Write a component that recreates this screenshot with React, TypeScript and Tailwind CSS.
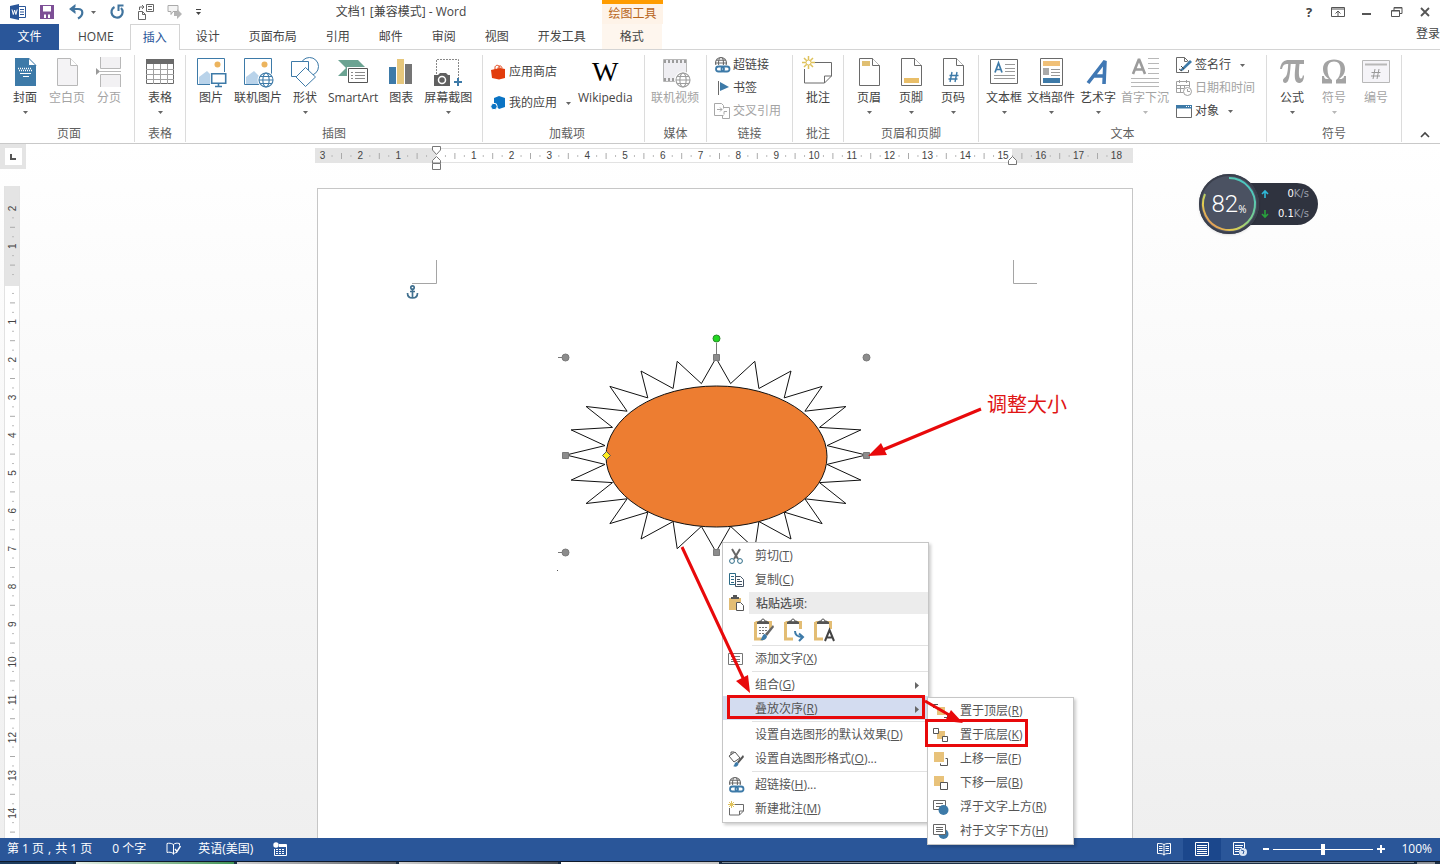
import type { ReactNode } from "react";

const BLUE = "#3d7aa8";
const GRAY = "#6a6a6a";
const LIGHT = "#b8b8b8";
const TAN = "#e8c27a";
const TEAL = "#2b6a86";

const TABS = ["HOME", "插入", "设计", "页面布局", "引用", "邮件", "审阅", "视图", "开发工具"];

function Icon({
  w = 32,
  h = w,
  className = "",
  children,
}: {
  w?: number;
  h?: number;
  className?: string;
  children: ReactNode;
}) {
  return (
    <svg
      aria-hidden
      width={w}
      height={h}
      viewBox={`0 0 ${w} ${h}`}
      fill="none"
      className={`shrink-0 overflow-visible ${className}`}
    >
      {children}
    </svg>
  );
}

function Caret({ muted }: { muted?: boolean }) {
  return (
    <Icon w={5} h={3}>
      <path d="M0 0h5L2.5 3z" fill={muted ? LIGHT : "#666"} />
    </Icon>
  );
}

/* ---------- icons ---------- */

function GlobeShape({ x, y, r, color }: { x: number; y: number; r: number; color: string }) {
  return (
    <g stroke={color} strokeWidth="1.1">
      <circle cx={x} cy={y} r={r} fill="#fff" />
      <ellipse cx={x} cy={y} rx={r * 0.45} ry={r} />
      <path d={`M${x - r} ${y}h${r * 2}M${x - r * 0.85} ${y - r * 0.5}h${r * 1.7}M${x - r * 0.85} ${y + r * 0.5}h${r * 1.7}`} />
    </g>
  );
}

function PageOutline({ color = GRAY, fill = "#fff" }: { color?: string; fill?: string }) {
  return (
    <>
      <path d="M6.5 2.5h13l7 7v20h-20z" fill={fill} stroke={color} />
      <path d="M19.5 2.5v7h7" fill="#fff" stroke={color} />
    </>
  );
}

const CoverIcon = () => (
  <Icon>
    <path d="M6 2h13l8 8v20H6z" fill={BLUE} />
    <path d="M19.5 2v7.5H27z" fill="#fff" stroke={BLUE} />
    <path d="M9 12.500h14M10 14.500h13" stroke="#fff" strokeDasharray="1 1" strokeWidth="1.500" />
    <path d="M11 17.500h11M14 20.500h6" stroke="#fff" />
  </Icon>
);

const BlankIcon = () => (
  <Icon>
    <PageOutline color={LIGHT} fill="#f4f3f5" />
  </Icon>
);

const BreakIcon = () => (
  <Icon>
    <path d="M7.5 1v11.5h20V1M7.5 31V18.500h20V31" fill="#f2f1f3" stroke={LIGHT} />
    <path d="M7 15.500h21" stroke={LIGHT} />
    <path d="M3 12l4 3.500L3 19z" fill="#999" />
  </Icon>
);

const TableIcon = () => (
  <Icon>
    <path d="M2.5 3.5h27v24h-27z" fill="#fff" stroke={GRAY} />
    <path d="M2 13.500h28M2 18.500h28M2 23.500h28M9.500 8v20M16.500 8v20M23.500 8v20" stroke="#a0a0a0" />
    <path d="M2 3h28v5H2z" fill="#6a6a6a" />
  </Icon>
);

function PictureShape() {
  return (
    <>
      <path d="M2.5 2.5h27v26h-27z" fill="#fff" stroke={BLUE} />
      <path d="M4 28v-7l8-6 7 7v6z" fill="#b9d3ea" />
      <circle cx="22.5" cy="8.5" r="3" fill="#ecb45e" />
    </>
  );
}

const PictureIcon = () => (
  <Icon>
    <PictureShape />
    <path d="M15 16h17v13H15z" fill="#fff" />
    <path d="M16.7 17.700h14v9.500h-14z" fill="#fff" stroke={BLUE} strokeWidth="1.6" />
    <path d="M23.5 27v3M20 30.500h7" stroke={BLUE} strokeWidth="1.6" />
  </Icon>
);

const OnlinePictureIcon = () => (
  <Icon>
    <PictureShape />
    <circle cx="24" cy="24" r="8.5" fill="#fff" />
    <GlobeShape x={24} y={24} r={7} color={BLUE} />
  </Icon>
);

const ShapesIcon = () => (
  <Icon>
    <circle cx="20.5" cy="10.5" r="9" stroke={BLUE} fill="#fff" />
    <path d="M2.5 5.500h17v15h-17z" fill="#fff" stroke={BLUE} />
    <path d="M16.5 11.500l10 9.500-10 9.500L7 21z" fill="#fff" stroke={BLUE} />
  </Icon>
);

const SmartArtIcon = () => (
  <Icon>
    <path d="M1 4h20l8 8-8 8H1l8-8z" fill="#6ba392" />
    <path d="M10 11h21v17H10z" fill="#fff" />
    <path d="M11.5 12.500h19v14h-19z" fill="#fff" stroke="#555" />
    <path d="M14 16.500h2M14 19.500h2M14 22.500h2M18 16.500h10M18 19.500h10M18 22.500h10" stroke="#8a8a8a" />
  </Icon>
);

const ChartIcon = () => (
  <Icon>
    <path d="M4 11h7v17H4z" fill={BLUE} />
    <path d="M12 3h7v25h-7z" fill="#e6c77c" />
    <path d="M20 8h7v20h-7z" fill="#757575" />
  </Icon>
);

const ScreenshotIcon = () => (
  <Icon>
    <path d="M4.5 18V3.500h22V24" stroke="#888" strokeDasharray="2 1" />
    <path d="M2 19h4l2-2h6l2 2h2v11H2z" fill="#606060" />
    <circle cx="10" cy="24" r="3.5" fill="#606060" stroke="#fff" strokeWidth="1.5" />
    <path d="M26 22v8M22 26h8" stroke={BLUE} strokeWidth="2" />
  </Icon>
);

const StoreIcon = () => (
  <Icon w={16}>
    <path d="M1 6l9-2 5 1v9l-6 1.500L2 14z" fill="#e23c0c" />
    <path d="M5 6V3.500C5 1 9 0 10 4M8 5c0-4 4-4 4-.5" stroke="#e23c0c" />
  </Icon>
);

const MyAppsIcon = () => (
  <Icon w={16}>
    <path d="M4 3l5-2 6 2v9l-6 2-2-2V9L4 8z" fill="#0b74c4" />
    <circle cx="4" cy="11.5" r="3.2" fill="#0b74c4" stroke="#fff" />
  </Icon>
);

const VideoIcon = () => (
  <Icon>
    <path d="M4.5 3.500h23v22h-23z" fill="#efeef2" stroke={LIGHT} />
    <path d="M5 5.500h22M5 23.500h22" stroke="#9c9c9c" strokeWidth="3" strokeDasharray="2 2" />
    <circle cx="24" cy="24" r="8.5" fill="#fff" />
    <GlobeShape x={24} y={24} r={7} color="#9c9c9c" />
  </Icon>
);

const LinkIcon = () => (
  <Icon w={16}>
    <GlobeShape x={7} y={6} r={5.5} color={GRAY} />
    <path d="M1 8h15v8H1z" fill="#fff" />
    <rect x="2" y="9.5" width="8" height="5" rx="2.5" stroke={BLUE} strokeWidth="1.8" />
    <rect x="7.5" y="9.5" width="8" height="5" rx="2.5" stroke={BLUE} strokeWidth="1.8" />
  </Icon>
);

const BookmarkIcon = () => (
  <Icon w={16}>
    <path d="M4.5 1v14" stroke={GRAY} />
    <path d="M6 2l9 5-9 4z" fill={BLUE} />
  </Icon>
);

const CrossRefIcon = () => (
  <Icon w={16}>
    <path d="M9.5 12.500h-9V.5h7l2 2v3M3 6.500h5M6 4.500l2 2-2 2" stroke="#a8a8a8" />
    <path d="M10 4.500h5.500v11H8.500V12M13 8.500h-3v3" stroke="#a8a8a8" />
  </Icon>
);

const CommentIcon = () => (
  <Icon>
    <path d="M12 6.500h17.500V20l-7 7H2.500V13" fill="#fff" stroke={GRAY} />
    <path d="M29.5 20h-7v7" stroke={GRAY} />
    <path d="M6.5 0v13M0 6.500h13M2 2l9 9M11 2l-9 9" stroke="#dfc25c" strokeWidth="1.5" />
    <circle cx="6.5" cy="6.5" r="2.5" fill="#fff" stroke="#dfc25c" />
  </Icon>
);

const HeaderIcon = () => (
  <Icon>
    <PageOutline />
    <path d="M9 5h8v5H9z" fill="#e0bf72" />
  </Icon>
);

const FooterIcon = () => (
  <Icon>
    <PageOutline />
    <path d="M9 22h15v5H9z" fill="#e9be68" />
  </Icon>
);

const PageNumberIcon = () => (
  <Icon>
    <PageOutline />
    <path d="M15 16l-2 10M20 16l-2 10M12.5 19.500h9M11.500 23h9" stroke={BLUE} strokeWidth="1.4" />
  </Icon>
);

const TextBoxIcon = () => (
  <Icon>
    <path d="M2.5 3.500h27v24h-27z" fill="#fff" stroke={GRAY} />
    <path d="M7 16.500L10.500 7l3.500 9.500M8.500 13.500h4.500" stroke={BLUE} strokeWidth="1.7" />
    <path d="M17 8.500h10M17 12.500h10M17 15.500h10M6 19.500h21M6 22.500h21" stroke="#9a9a9a" />
  </Icon>
);

const QuickPartsIcon = () => (
  <Icon>
    <path d="M5.5 2.500h22v27h-22z" fill="#fff" stroke={GRAY} />
    <path d="M8 5h17v5H8z" fill="#f0c078" />
    <path d="M8 12h6v7H8z" fill="#a9a9a9" />
    <path d="M16 13.500h9M16 16.500h9M16 19.500h9" stroke="#999" />
    <path d="M8 22h17v5H8z" fill={BLUE} />
  </Icon>
);

const WordArtIcon = () => (
  <Icon>
    <path d="M6 27L23 5l-1 23M11 20h12" stroke="#4078b4" strokeWidth="3.6" strokeLinejoin="bevel" />
  </Icon>
);

const DropCapIcon = () => (
  <Icon>
    <path d="M4 18l6-15 6 15M6 13.500h8" stroke="#9c9c9c" strokeWidth="2.6" strokeLinejoin="bevel" />
    <path d="M19 2.500h11M19 7.500h11M19 12.500h11M19 17.500h11M2 22.500h28M2 26.500h28M2 30.500h28" stroke={LIGHT} />
  </Icon>
);

const SignatureIcon = () => (
  <Icon w={16}>
    <path d="M12.5 13v2.500H.5V.5h8l4 4" fill="#fff" stroke={GRAY} />
    <path d="M8.5.5v4h3" stroke={GRAY} />
    <path d="M5 12L14 3l2 2-9 8.500-3 .5z" fill={BLUE} />
    <path d="M3 12l3 2M5 9l3 3" stroke="#444" />
  </Icon>
);

const DateIcon = () => (
  <Icon w={16}>
    <path d="M.5 1.500h13v6M.5 1.500v11h7M1 5.500h12M4.500 5v7M8.500 5v3M1 8.500h7M3.500 0v3M10.500 0v3" stroke="#a0a0a0" />
    <circle cx="11.5" cy="11.5" r="4" fill="#fff" stroke="#a0a0a0" />
    <path d="M11.5 9v2.500H14" stroke="#a0a0a0" />
  </Icon>
);

const ObjectIcon = () => (
  <Icon w={16}>
    <path d="M.5 2.500h15v12H.5z" fill="#fff" stroke={GRAY} />
    <path d="M0 2h16v3.500H0z" fill={BLUE} />
    <path d="M10 3.500h5" stroke="#fff" strokeDasharray="1 1" />
  </Icon>
);

const PiIcon = () => (
  <Icon>
    <path
      d="M4 13C5 6 8 4 13 4h15v4h-4.500c-.8 7-1 14 1 14.500 1.500.3 2-1 2.300-3H28c0 5-2 7.500-5 7.500-6-.5-4-11-3.300-19h-5c-.5 7-1 13-2.500 16.500C11 28 6.500 27.500 7 24c.5-2 3-2.500 4-6 .8-3 1-6 1.200-10C8 8 7 9 6 13z"
      fill="#a3a3a3"
    />
  </Icon>
);

const OmegaIcon = () => (
  <Icon>
    <path
      d="M4 20h2c.5 3 1 3 5 3-3-2-6-5-6-10C5 7 9 3.500 16 3.500S27 7 27 13c0 5-3 8-6 10 4 0 4.500 0 5-3h2v7.500H18V24c3-2 4.500-6 4.500-11 0-4.500-2-7.500-6.500-7.500S9.500 8.500 9.500 13c0 5 1.500 9 4.500 11v3.500H4z"
      fill="#a3a3a3"
    />
  </Icon>
);

const NumberIcon = () => (
  <Icon>
    <path d="M2.5 4.500h27v22h-27z" fill="#f5f4f8" stroke={LIGHT} />
    <path d="M5 8.500h22" stroke={LIGHT} strokeWidth="2" />
    <path d="M15 13l-2 10M19 13l-2 10M11.5 16.500h9M11 20h9" stroke="#999" />
  </Icon>
);

/* ---------- title bar ---------- */

function TitleBar() {
  return (
    <div className="flex h-6 items-center">
      <div className="flex w-[200px] shrink-0 items-center pl-[10px]">
        <Icon w={16} className="mr-[13px]">
          <path d="M0 2l9-2v16l-9-2z" fill="#2a5699" />
          <path d="M9 2.500h6.500v11H9M10 5.500h4M10 8h4M10 10.500h4" stroke="#2a5699" />
          <path d="M2 5.500l1.300 5L4.600 6l1.300 4.500 1.300-5" stroke="#fff" />
        </Icon>
        <button aria-label="保存" className="mr-[14px]">
          <Icon w={16}>
            <path d="M1 1h14v14H1z" fill="#7d4f96" />
            <path d="M4 2h8v5.500H4zM5 10.500h2V14H5zM9 10.500h2V14H9z" fill="#fff" />
          </Icon>
        </button>
        <button aria-label="撤消" className="mr-[6px]">
          <Icon w={16}>
            <path d="M3 5h6c5.500 0 6 6 0 9.500" stroke="#41749e" strokeWidth="2.2" />
            <path d="M6.5 0v3L4.500 5l2 2v3L0 5z" fill="#41749e" />
          </Icon>
        </button>
        <Caret />
        <button aria-label="重复" className="ml-[13px] mr-[13px]">
          <Icon w={16}>
            <path d="M5.5 3A5.600 5.600 0 1 0 12 4" stroke="#41749e" strokeWidth="2.2" />
            <path d="M14.5 1.500H9.500V7" stroke="#41749e" strokeWidth="2" />
          </Icon>
        </button>
        <button aria-label="粘贴格式" className="mr-[13px]">
          <Icon w={16}>
            <path d="M8.5.5h7v7h-7zM10 2.500h4M10 5.500h4M.5 7.500h4l3 3v5h-7zM4.500 7.500v3h3M1.500 6V3h4M4 1l2 2-2 2" stroke="#666" />
          </Icon>
        </button>
        <Icon w={16} className="mr-[13px]">
          <path d="M1 1.500h10v6H6l-2 3v-3H1z" fill="#f4f4f4" stroke="#aaa" />
          <path d="M10 5l5 5-5 5v-3H7V8h3z" fill="#b5b5b5" />
        </Icon>
        <button aria-label="自定义快速访问工具栏">
          <Icon w={5} h={6}>
            <path d="M0 .5h5" stroke="#444" />
            <path d="M0 3h5L2.5 6z" fill="#444" />
          </Icon>
        </button>
      </div>
      <h1 className="w-[402px] shrink-0 text-center">文档1 [兼容模式] - Word</h1>
      <div className="flex h-full w-[61px] shrink-0 items-center justify-center border-t-4 border-[#ff9c00] bg-[#fef3e8] text-[#b8651b]">
        绘图工具
      </div>
      <div className="ml-auto flex items-center gap-[15px] pr-2">
        <button aria-label="帮助" className="w-[14px] text-[13px] font-bold">
          ?
        </button>
        <button aria-label="功能区显示选项">
          <Icon w={14} h={12}>
            <path d="M.5 1.500h13v9H.5z" stroke="#555" />
            <path d="M1 3h12M7 10V5M4.500 7.500L7 5l2.500 2.500" stroke="#555" />
          </Icon>
        </button>
        <button aria-label="最小化">
          <Icon w={14} h={12}>
            <path d="M2 8h9" stroke="#555" strokeWidth="2" />
          </Icon>
        </button>
        <button aria-label="向下还原">
          <Icon w={14} h={12}>
            <path d="M5 4V1.500h8v6h-2M2.500 4.500h8v6h-8zM5 2h8M3 5h8" stroke="#555" />
          </Icon>
        </button>
        <button aria-label="关闭">
          <Icon w={14} h={12}>
            <path d="M3 2l8 8M11 2l-8 8" stroke="#555" strokeWidth="1.8" />
          </Icon>
        </button>
      </div>
    </div>
  );
}

function TabRow() {
  return (
    <div
      role="tablist"
      className="flex h-[26px] shrink-0 items-stretch gap-[3px] shadow-[inset_0_-1px_0_#d4d4d4]"
    >
      <button role="tab" className="mr-[3px] w-[59px] bg-[#2a5699] text-white">
        文件
      </button>
      {TABS.map((t) =>
        t === "插入" ? (
          <button
            key={t}
            role="tab"
            aria-selected
            className="border-x border-t border-[#d4d4d4] bg-white px-3 text-[#2a5699]"
          >
            {t}
          </button>
        ) : (
          <button key={t} role="tab" className="px-[13px]">
            {t}
          </button>
        ),
      )}
      <button role="tab" className="border-b border-[#d4d4d4] bg-[#fef6ee] px-[18px]">
        格式
      </button>
      <a href="#signin" className="ml-auto pt-[2px]">
        登录
      </a>
    </div>
  );
}

/* ---------- ribbon ---------- */

function Group({ label, className, children }: { label: string; className: string; children: ReactNode }) {
  return (
    <section
      aria-label={label}
      className={`mb-px mt-[5px] flex shrink-0 flex-col border-r border-[#dcdcdc] ${className}`}
    >
      <div className="flex flex-1">{children}</div>
      <div className="text-center text-[#5f5f5f]">{label}</div>
    </section>
  );
}

function BigButton({
  icon,
  label,
  caret,
  disabled,
}: {
  icon: ReactNode;
  label: string;
  caret?: boolean;
  disabled?: boolean;
}) {
  return (
    <button
      disabled={disabled}
      className={`flex min-w-[42px] flex-col items-center self-start px-[2px] pt-px ${disabled ? "text-[#a3a3a3]" : ""}`}
    >
      {icon}
      <span className="mt-[2px] whitespace-nowrap">{label}</span>
      {caret && (
        <span className="mt-[5px]">
          <Caret muted={disabled} />
        </span>
      )}
    </button>
  );
}

function SmallButton({
  icon,
  label,
  caret,
  disabled,
}: {
  icon: ReactNode;
  label: string;
  caret?: boolean;
  disabled?: boolean;
}) {
  return (
    <button
      disabled={disabled}
      className={`flex h-5 items-center gap-[3px] whitespace-nowrap ${disabled ? "text-[#a3a3a3]" : ""}`}
    >
      {icon}
      {label}
      {caret && (
        <span className="ml-[6px]">
          <Caret />
        </span>
      )}
    </button>
  );
}

function Ribbon() {
  return (
    <div className="flex h-[94px] shrink-0 border-b border-[#c9c9c9] bg-white">
      <Group label="页面" className="w-[135px] pl-1">
        <BigButton icon={<CoverIcon />} label="封面" caret />
        <BigButton icon={<BlankIcon />} label="空白页" disabled />
        <BigButton icon={<BreakIcon />} label="分页" disabled />
      </Group>
      <Group label="表格" className="w-[51px] px-1">
        <BigButton icon={<TableIcon />} label="表格" caret />
      </Group>
      <Group label="插图" className="w-[297px] px-1">
        <BigButton icon={<PictureIcon />} label="图片" />
        <BigButton icon={<OnlinePictureIcon />} label="联机图片" />
        <BigButton icon={<ShapesIcon />} label="形状" caret />
        <BigButton icon={<SmartArtIcon />} label="SmartArt" />
        <BigButton icon={<ChartIcon />} label="图表" />
        <BigButton icon={<ScreenshotIcon />} label="屏幕截图" caret />
      </Group>
      <Group label="加载项" className="w-[162px] pl-[7px]">
        <div className="flex flex-col items-start gap-[11px] pt-[7px]">
          <SmallButton icon={<StoreIcon />} label="应用商店" />
          <SmallButton icon={<MyAppsIcon />} label="我的应用" caret />
        </div>
        <button className="ml-[7px] flex flex-col items-center self-start pt-px">
          <span className="flex h-8 items-center font-['Liberation_Serif'] text-[28px] text-black">W</span>
          <span className="mt-[2px]">Wikipedia</span>
        </button>
      </Group>
      <Group label="媒体" className="w-[62px] px-1">
        <BigButton icon={<VideoIcon />} label="联机视频" disabled />
      </Group>
      <Group label="链接" className="w-[86px]">
        <div className="flex flex-col items-start gap-[3px] pl-[7px]">
          <SmallButton icon={<LinkIcon />} label="超链接" />
          <SmallButton icon={<BookmarkIcon />} label="书签" />
          <SmallButton icon={<CrossRefIcon />} label="交叉引用" disabled />
        </div>
      </Group>
      <Group label="批注" className="w-[51px] px-1">
        <BigButton icon={<CommentIcon />} label="批注" />
      </Group>
      <Group label="页眉和页脚" className="w-[135px] px-1">
        <BigButton icon={<HeaderIcon />} label="页眉" caret />
        <BigButton icon={<FooterIcon />} label="页脚" caret />
        <BigButton icon={<PageNumberIcon />} label="页码" caret />
      </Group>
      <Group label="文本" className="w-[288px] px-1">
        <BigButton icon={<TextBoxIcon />} label="文本框" caret />
        <BigButton icon={<QuickPartsIcon />} label="文档部件" caret />
        <BigButton icon={<WordArtIcon />} label="艺术字" caret />
        <BigButton icon={<DropCapIcon />} label="首字下沉" caret disabled />
        <div className="ml-[5px] flex flex-col items-start gap-[3px]">
          <SmallButton icon={<SignatureIcon />} label="签名行" caret />
          <SmallButton icon={<DateIcon />} label="日期和时间" disabled />
          <SmallButton icon={<ObjectIcon />} label="对象" caret />
        </div>
      </Group>
      <Group label="符号" className="w-[135px] px-1">
        <BigButton icon={<PiIcon />} label="公式" caret />
        <BigButton icon={<OmegaIcon />} label="符号" caret disabled />
        <BigButton icon={<NumberIcon />} label="编号" disabled />
      </Group>
      <button aria-label="折叠功能区" className="ml-auto self-end pb-[6px] pr-[10px]">
        <Icon w={10} h={5}>
          <path d="M1 5l4-4 4 4" stroke="#444" strokeWidth="1.6" />
        </Icon>
      </button>
    </div>
  );
}

/* ---------- rulers ---------- */

const CM = 37.8;

function HorizontalRuler() {
  const zero = 121;
  const marks = Array.from({ length: 22 }, (_, i) => i - 3);
  return (
    <svg aria-hidden width="818" height="26" viewBox="0 0 818 26" className="shrink-0 overflow-visible">
      <path d="M0 4h818v15H0z" fill="#e4e4e4" />
      <path d="M121 4h576v15H121z" fill="#fff" />
      <path d="M121 4.5h576M121 18.5h576" stroke="#e2e2e2" />
      {marks.map((n) => {
        const x = zero + n * CM;
        return (
          <g key={n}>
            {n !== 0 && (
              <text x={x} y="15" textAnchor="middle" fontSize="10" fill="#444">
                {Math.abs(n)}
              </text>
            )}
            {n < 18 && (
              <>
                <path d={`M${x + CM / 2} 9v6`} stroke="#aaa" />
                <path d={`M${x + CM / 4} 11v2M${x + (CM * 3) / 4} 11v2`} stroke="#bbb" />
              </>
            )}
          </g>
        );
      })}
      <path d="M117.5 2.500h8V6l-4 4.500-4-4.500zM121.500 12.500l4 4v2.500h-8v-2.500zM117.500 19.500h8v6h-8zM697.500 12.500l4 4v4h-8v-4z" fill="#fff" stroke="#777" />
    </svg>
  );
}

function VerticalRuler() {
  const zero = 98;
  const marks = Array.from({ length: 17 }, (_, i) => i - 2);
  return (
    <div className="mt-[17px] w-[16px] shrink-0 overflow-hidden border-x border-[#e2e2e2] bg-white">
      <svg aria-hidden width="14" height="650" viewBox="0 0 14 650">
        <path d="M0 0h14v100H0z" fill="#e4e4e4" />
        {marks.map((n) => {
          const y = zero + n * CM;
          return (
            <g key={n}>
              {n !== 0 && (
                <text
                  x="0"
                  y="0"
                  transform={`translate(11 ${y}) rotate(-90)`}
                  textAnchor="middle"
                  fontSize="10"
                  fill="#444"
                >
                  {Math.abs(n)}
                </text>
              )}
              <path d={`M5 ${y + CM / 2}h5`} stroke="#aaa" />
              <path d={`M7 ${y + CM / 4}h2M7 ${y + (CM * 3) / 4}h2`} stroke="#bbb" />
            </g>
          );
        })}
      </svg>
    </div>
  );
}

/* ---------- drawing on the page ---------- */

function sunPoints() {
  const pts: string[] = [];
  for (let i = 0; i < 48; i++) {
    const a = (i * Math.PI) / 24;
    const [rx, ry] = i % 2 === 0 ? [150, 97] : [112, 72];
    pts.push(`${(716 + rx * Math.cos(a)).toFixed(1)},${(455 + ry * Math.sin(a)).toFixed(1)}`);
  }
  return pts.join(" ");
}

function SunShape() {
  return (
    <svg aria-hidden width="815" height="649" viewBox="318 189 815 649" fill="none" className="absolute left-0 top-0">
      <path d="M412 283.500h24.500V260M1037 283.500h-23.500V260" stroke="#a5a5a5" />
      <g stroke="#41708f" strokeWidth="1.7">
        <circle cx="412.5" cy="287.5" r="1.7" />
        <path d="M412.5 289v9M410 291.500h5M407.500 293c0 3 2 5 5 5s5-2 5-5" />
      </g>
      <polygon points={sunPoints()} fill="#fff" stroke="#111" />
      <ellipse cx="716.5" cy="456.5" rx="110.5" ry="70.5" fill="#ed7d31" stroke="#111" />
      <path d="M716.5 343v12M558 357.500h4M558 552.500h4" stroke="#777" />
      <g fill="#8c8c8c" stroke="#7a7a7a">
        <circle cx="565.5" cy="357.5" r="3.5" />
        <circle cx="866.5" cy="357.5" r="3.5" />
        <circle cx="565.5" cy="552.5" r="3.5" />
        <path d="M713.5 354.500h6v6h-6zM562.500 452.500h6v6h-6zM863.500 452.500h6v6h-6zM713.500 549.500h6v6h-6z" />
      </g>
      <circle cx="716.5" cy="338.5" r="3.5" fill="#22d822" stroke="#2a8a2a" />
      <path d="M606.5 451.500l4 4-4 4-4-4z" fill="#ffee20" stroke="#555" />
      <path d="M557 570.500h1" stroke="#555" />
    </svg>
  );
}

function Annotations() {
  return (
    <svg
      aria-hidden
      width="815"
      height="649"
      viewBox="318 189 815 649"
      fill="none"
      className="pointer-events-none absolute left-0 top-0 z-30"
    >
      <g stroke="#e8090b" strokeWidth="3">
        <path d="M981 409L880 451M682 547l62 133M925 701l26 15" />
        <path d="M728.5 696.500h195v21h-195zM926.500 720.500h100v25h-100z" />
      </g>
      <g fill="#e8090b">
        <path d="M868 456l13-13 6 12zM750 693l-14-12 12-6zM963 723l-18-2 6-11z" />
      </g>
    </svg>
  );
}

/* ---------- context menus ---------- */

function MenuItem({
  icon,
  text,
  hotkey,
  tail = "",
  sub,
  active,
}: {
  icon?: ReactNode;
  text: string;
  hotkey: string;
  tail?: string;
  sub?: boolean;
  active?: boolean;
}) {
  return (
    <button
      role="menuitem"
      className={`flex h-6 w-full items-center whitespace-nowrap pl-[5px] pr-[9px] pt-[2px] text-left ${active ? "bg-[#d3dcf0]" : ""}`}
    >
      <span className="mr-[11px] w-4 shrink-0">{icon}</span>
      <span>
        {text}(<u>{hotkey}</u>){tail}
      </span>
      {sub && (
        <Icon w={4} h={7} className="ml-auto">
          <path d="M0 0l4 3.500L0 7z" fill="#666" />
        </Icon>
      )}
    </button>
  );
}

function Divider() {
  return <div role="separator" className="ml-[29px] h-[2px] border-b border-[#e2e2e2]" />;
}

function Clipboard({ children }: { children: ReactNode }) {
  return (
    <Icon w={22} h={24}>
      <path d="M2.5 4v17H10M2.500 4.500h15V11" stroke="#e3bd74" strokeWidth="3" />
      <path d="M4 6V4l3-1.500h6L16 4v2z" fill="#555" />
      <circle cx="10" cy="2.500" r="1.5" fill="#fff" stroke="#555" />
      {children}
    </Icon>
  );
}

function ContextMenu() {
  return (
    <div
      role="menu"
      className="absolute left-[404px] top-[353px] z-10 w-[207px] border border-[#c6c6c6] bg-white pb-[2px] text-[#555] shadow-[2px_2px_3px_rgba(0,0,0,0.2)]"
    >
      <MenuItem
        icon={
          <Icon w={16}>
            <path d="M4 1l6 10M12 1L6 11" stroke="#666" strokeWidth="2" />
            <circle cx="4" cy="13" r="2.4" stroke={TEAL} />
            <circle cx="12" cy="13" r="2.4" stroke={TEAL} />
          </Icon>
        }
        text="剪切"
        hotkey="T"
      />
      <MenuItem
        icon={
          <Icon w={16}>
            <path d="M7 12.500H1.500v-11h6v3M3 4.500h3M3 7.500h3M3 10.500h3" stroke={TEAL} />
            <path d="M7.5 4.500h5l3 3v7h-8zM9 7.500h3M9 9.500h5M9 12.500h5" stroke="#456" />
          </Icon>
        }
        text="复制"
        hotkey="C"
      />
      <div className="flex h-6 items-center pl-[5px]">
        <Icon w={16}>
          <path d="M1 3h12v4H8v8H1z" fill="#e3bd74" />
          <path d="M3 3h8M5 1h4" stroke="#555" strokeWidth="2" />
          <path d="M8.5 7.500h4l3 3v5h-7z" fill="#fff" stroke="#555" />
        </Icon>
        <span className="ml-[5px] h-[22px] flex-1 bg-[#ececec] pl-[7px] font-medium leading-6">粘贴选项:</span>
      </div>
      <div className="flex h-[29px] items-center gap-2 pl-[30px]">
        <button aria-label="保留源格式">
          <Clipboard>
            <path d="M6 9.500h8M6 12.500h8M6 15.500h6" stroke="#777" strokeDasharray="2 1" />
            <path d="M20 7l-8 9 2 2 7-9z" fill="#666" />
            <path d="M7 22c2 0 2-6 5-6l2 2c0 3-3 5-7 4z" fill={BLUE} />
          </Clipboard>
        </button>
        <button aria-label="合并格式">
          <Clipboard>
            <path d="M12 13c0 5 3 6 8 6M16 15.500l4 3.500-4 4" stroke={BLUE} strokeWidth="2" />
          </Clipboard>
        </button>
        <button aria-label="只保留文本">
          <Clipboard>
            <path d="M12 23l4.500-11L21 23M13.500 19.500h6" stroke="#444" strokeWidth="2" />
          </Clipboard>
        </button>
      </div>
      <Divider />
      <MenuItem
        icon={
          <Icon w={16}>
            <path d="M.5 2.500h14v11H.5zM3 5.500h9M3 8.500h9M3 10.500h9" stroke="#777" />
          </Icon>
        }
        text="添加文字"
        hotkey="X"
      />
      <Divider />
      <MenuItem text="组合" hotkey="G" sub />
      <MenuItem text="叠放次序" hotkey="R" sub active />
      <Divider />
      <MenuItem text="设置自选图形的默认效果" hotkey="D" />
      <MenuItem
        icon={
          <Icon w={16}>
            <path d="M1 5l6-4 5 6-6 4zM3 4V1h3" stroke="#555" />
            <path d="M15 4l-6 7 1.500 1.500L16 6z" fill="#555" />
            <path d="M5 15c2 0 1-4 4-4l1.500 1.500c0 3-3 4-5.500 2.500z" fill={BLUE} />
          </Icon>
        }
        text="设置自选图形格式"
        hotkey="O"
        tail="..."
      />
      <Divider />
      <MenuItem icon={<LinkIcon />} text="超链接" hotkey="H" tail="..." />
      <MenuItem
        icon={
          <Icon w={16}>
            <path d="M6 3.500h9.500V10l-4 4H1.500V7M15.500 10h-4v4" stroke={GRAY} />
            <path d="M3.500 0v7M0 3.500h7M1 1l5 5M6 1L1 6" stroke="#dfc25c" />
          </Icon>
        }
        text="新建批注"
        hotkey="M"
      />
    </div>
  );
}

function OrderMenu() {
  return (
    <div
      role="menu"
      className="absolute left-[609px] top-[508px] z-20 w-[147px] border border-[#c6c6c6] bg-white pb-[2px] text-[#555] shadow-[2px_2px_3px_rgba(0,0,0,0.2)]"
    >
      <MenuItem
        icon={
          <Icon w={16}>
            <path d="M4 4h8v8H4z" fill={TAN} />
            <path d="M.5 5V1.500H5M11 14.500h3.500V11" stroke="#555" />
          </Icon>
        }
        text="置于顶层"
        hotkey="R"
      />
      <MenuItem
        icon={
          <Icon w={16}>
            <path d="M4 4h8v8H4z" fill={TAN} />
            <path d="M.5 1.500h5v5h-5zM9.500 9.500h5v5h-5z" fill="#fff" stroke="#555" />
          </Icon>
        }
        text="置于底层"
        hotkey="K"
      />
      <MenuItem
        icon={
          <Icon w={16}>
            <path d="M1 1h10v10H1z" fill={TAN} />
            <path d="M12.5 7.500h2v7h-7v-2" stroke="#555" />
          </Icon>
        }
        text="上移一层"
        hotkey="F"
      />
      <MenuItem
        icon={
          <Icon w={16}>
            <path d="M1 1h10v10H1z" fill={TAN} />
            <path d="M7.5 7.500h7v7h-7z" fill="#fff" stroke="#555" />
          </Icon>
        }
        text="下移一层"
        hotkey="B"
      />
      <MenuItem
        icon={
          <Icon w={16}>
            <path d="M.5 1.500h12v9H.5zM3 4.500h7M3 7.500h7" stroke="#666" />
            <circle cx="10.5" cy="11" r="5" fill={BLUE} />
          </Icon>
        }
        text="浮于文字上方"
        hotkey="R"
      />
      <MenuItem
        icon={
          <Icon w={16}>
            <circle cx="10.5" cy="11" r="5" fill={BLUE} />
            <path d="M.5 1.500h12v10H.5z" fill="#fff" stroke="#666" />
            <path d="M3 4.500h7M3 6.500h7M3 8.500h7" stroke="#666" />
          </Icon>
        }
        text="衬于文字下方"
        hotkey="H"
      />
    </div>
  );
}

/* ---------- network widget ---------- */

function SpeedWidget() {
  return (
    <div className="absolute right-[122px] top-[174px] flex items-center">
      <div className="relative z-10 flex size-[60px] items-center justify-center rounded-full bg-[#4b5262] text-white shadow">
        <Icon w={60} className="absolute inset-0">
          <defs>
            <linearGradient id="ring" x1="0.9" y1="0" x2="0.1" y2="0.9">
              <stop offset="0" stopColor="#3cc4cf" />
              <stop offset="0.5" stopColor="#7fd08a" />
              <stop offset="0.8" stopColor="#e3cf4f" />
              <stop offset="1" stopColor="#e0915a" />
            </linearGradient>
          </defs>
          <circle cx="30" cy="30" r="29" stroke="#3a3f4c" strokeWidth="2" />
          <path d="M30 4A26 26 0 1 1 6 20" stroke="url(#ring)" strokeWidth="2" />
        </Icon>
        <span className="font-[Roboto] text-2xl font-light">82</span>
        <span className="mt-[10px] text-[10px]">%</span>
      </div>
      <div className="-ml-4 flex h-[42px] w-[75px] flex-col justify-center rounded-r-full bg-[#2f333f] pl-[18px] pr-[9px] font-['DejaVu_Sans'] text-[10px] leading-5 text-white">
        <div className="flex items-center">
          <Icon w={8}>
            <path d="M4 8V1M1 4l3-3 3 3" stroke="#2fb8d8" strokeWidth="1.6" />
          </Icon>
          <span className="ml-auto">0</span>
          <span className="text-[#9aa0ad]">K/s</span>
        </div>
        <div className="flex items-center">
          <Icon w={8}>
            <path d="M4 0v7M1 4l3 3 3-3" stroke="#28a23c" strokeWidth="1.6" />
          </Icon>
          <span className="ml-auto">0.1</span>
          <span className="text-[#9aa0ad]">K/s</span>
        </div>
      </div>
    </div>
  );
}

/* ---------- status bar ---------- */

function StatusBar() {
  return (
    <footer className="flex h-[23px] shrink-0 items-center bg-[#2a5699] pb-px pl-[7px] pr-2 text-white">
      <span className="flex gap-1">
        <span>第 1 页</span>
        <span>,</span>
        <span>共 1 页</span>
      </span>
      <span className="ml-5">0 个字</span>
      <Icon w={16} h={14} className="ml-5">
        <path d="M7.5 2.500v10M7.500 2.500C5 1 3 1 1 1.500v9c2-.5 4-.5 6.500 1M7.500 2.500C9 1 11 1 13.500 1.500v2M7.500 12c1-1 2-1.500 3.500-1.500" stroke="#fff" />
        <path d="M9 7l2 2.500L14.500 4" stroke="#fff" strokeWidth="1.4" />
      </Icon>
      <span className="ml-4">英语(美国)</span>
      <Icon w={14} className="ml-5">
        <path d="M6 2.500h7.500v11h-12V7" stroke="#fff" />
        <path d="M6 4h7" stroke="#fff" strokeWidth="2" />
        <path d="M3 7.500h9M3 9.500h9M3 11.500h9" stroke="#fff" strokeDasharray="2 1" />
        <circle cx="3" cy="3" r="2.7" fill="#fff" />
      </Icon>
      <button aria-label="阅读视图" className="ml-auto">
        <Icon w={14}>
          <path d="M7 2.500C5 1.500 3 1.500.5 1.500v10c2.500 0 4.500 0 6.500 1 2-1 4-1 6.500-1v-10c-2.500 0-4.500 0-6.500 1zM7 2.500v11" stroke="#fff" />
          <path d="M2 4.500h3.500M2 6.500h3.500M2 8.500h3.500M8.500 4.500H12M8.500 6.500H12M8.500 8.500H12" stroke="#fff" />
        </Icon>
      </button>
      <button aria-label="页面视图" className="ml-3 flex h-[22px] w-[38px] items-center justify-center bg-[#1b478c]">
        <Icon w={14}>
          <path d="M.5.5h13v13H.5zM2 3.500h10M2 5.500h10M2 7.500h10M2 9.500h10M2 11.500h10" stroke="#fff" />
        </Icon>
      </button>
      <button aria-label="Web 版式视图" className="ml-3">
        <Icon w={14}>
          <path d="M6 12.500H.5V.5h11V6M2 3.500h8M2 5.500h7M2 7.500h4M2 9.500h4" stroke="#fff" />
          <circle cx="10" cy="10" r="4" fill="#dce6f4" />
          <path d="M8 8l3 1-1 3" stroke="#2a5699" />
        </Icon>
      </button>
      <button aria-label="缩小" className="ml-4 h-[2px] w-[6px] bg-white" />
      <input
        type="range"
        aria-label="显示比例"
        min={0}
        max={100}
        defaultValue={50}
        className="mx-1 h-[11px] w-[100px] appearance-none bg-transparent [&::-webkit-slider-runnable-track]:h-px [&::-webkit-slider-runnable-track]:bg-white [&::-webkit-slider-thumb]:mt-[-5px] [&::-webkit-slider-thumb]:h-[11px] [&::-webkit-slider-thumb]:w-1 [&::-webkit-slider-thumb]:appearance-none [&::-webkit-slider-thumb]:bg-white"
      />
      <button aria-label="放大">
        <Icon w={8}>
          <path d="M4 0v8M0 4h8" stroke="#fff" strokeWidth="2" />
        </Icon>
      </button>
      <span className="ml-4">100%</span>
    </footer>
  );
}

function TaskbarEdge() {
  return (
    <div className="flex h-[3px] shrink-0 gap-[3px] border-t border-[#0e1a2c] bg-[#1c2f45]">
      <div className="w-[73px] bg-[#1d3c5e]" />
      <div className="w-[158px] bg-linear-to-r from-[#e6efe8] to-[#3f9356]" />
      <div className="w-[159px] bg-linear-to-r from-[#d0d0d0] to-[#5b5f66]" />
      <div className="w-[159px] bg-linear-to-r from-[#d0d0d0] to-[#4a4f56]" />
      <div className="w-[158px] bg-linear-to-r from-white to-[#c4c4c4]" />
      <div className="flex-1 border-t border-[#7d8b99]" />
      <div className="mr-[5px] w-[18px] bg-[#8b9097]" />
    </div>
  );
}

export default function App() {
  return (
    <div className="relative flex h-screen flex-col overflow-hidden bg-white font-['Open_Sans','Noto_Sans_CJK_SC',sans-serif] text-xs leading-4 text-[#444]">
      <TitleBar />
      <TabRow />
      <Ribbon />
      <main className="flex min-h-0 flex-1 flex-col bg-linear-to-b from-white to-[#efefef]">
        <div className="flex h-[25px] shrink-0">
          <button aria-label="制表符" className="flex w-[26px] items-center justify-center bg-[#e4e4e4]">
            <span className="flex size-[17px] items-center justify-center bg-white">
              <Icon w={6}>
                <path d="M1 0v5h5" stroke="#555" strokeWidth="2" />
              </Icon>
            </span>
          </button>
          <div className="flex flex-1 justify-center pr-[18px] font-['Liberation_Sans']">
            <HorizontalRuler />
          </div>
        </div>
        <div className="flex min-h-0 flex-1 pl-1 font-['Liberation_Sans']">
          <VerticalRuler />
          <div className="flex flex-1 justify-center pr-[10px] font-['Open_Sans','Noto_Sans_CJK_SC',sans-serif]">
            <div className="relative mt-[19px] w-[816px] shrink-0 border-x border-t border-[#c6c6c6] bg-white">
              <SunShape />
              <span className="absolute left-[669px] top-[204px] text-xl leading-6 text-[#e01515]">调整大小</span>
              <ContextMenu />
              <OrderMenu />
              <Annotations />
            </div>
          </div>
        </div>
      </main>
      <StatusBar />
      <TaskbarEdge />
      <SpeedWidget />
    </div>
  );
}
